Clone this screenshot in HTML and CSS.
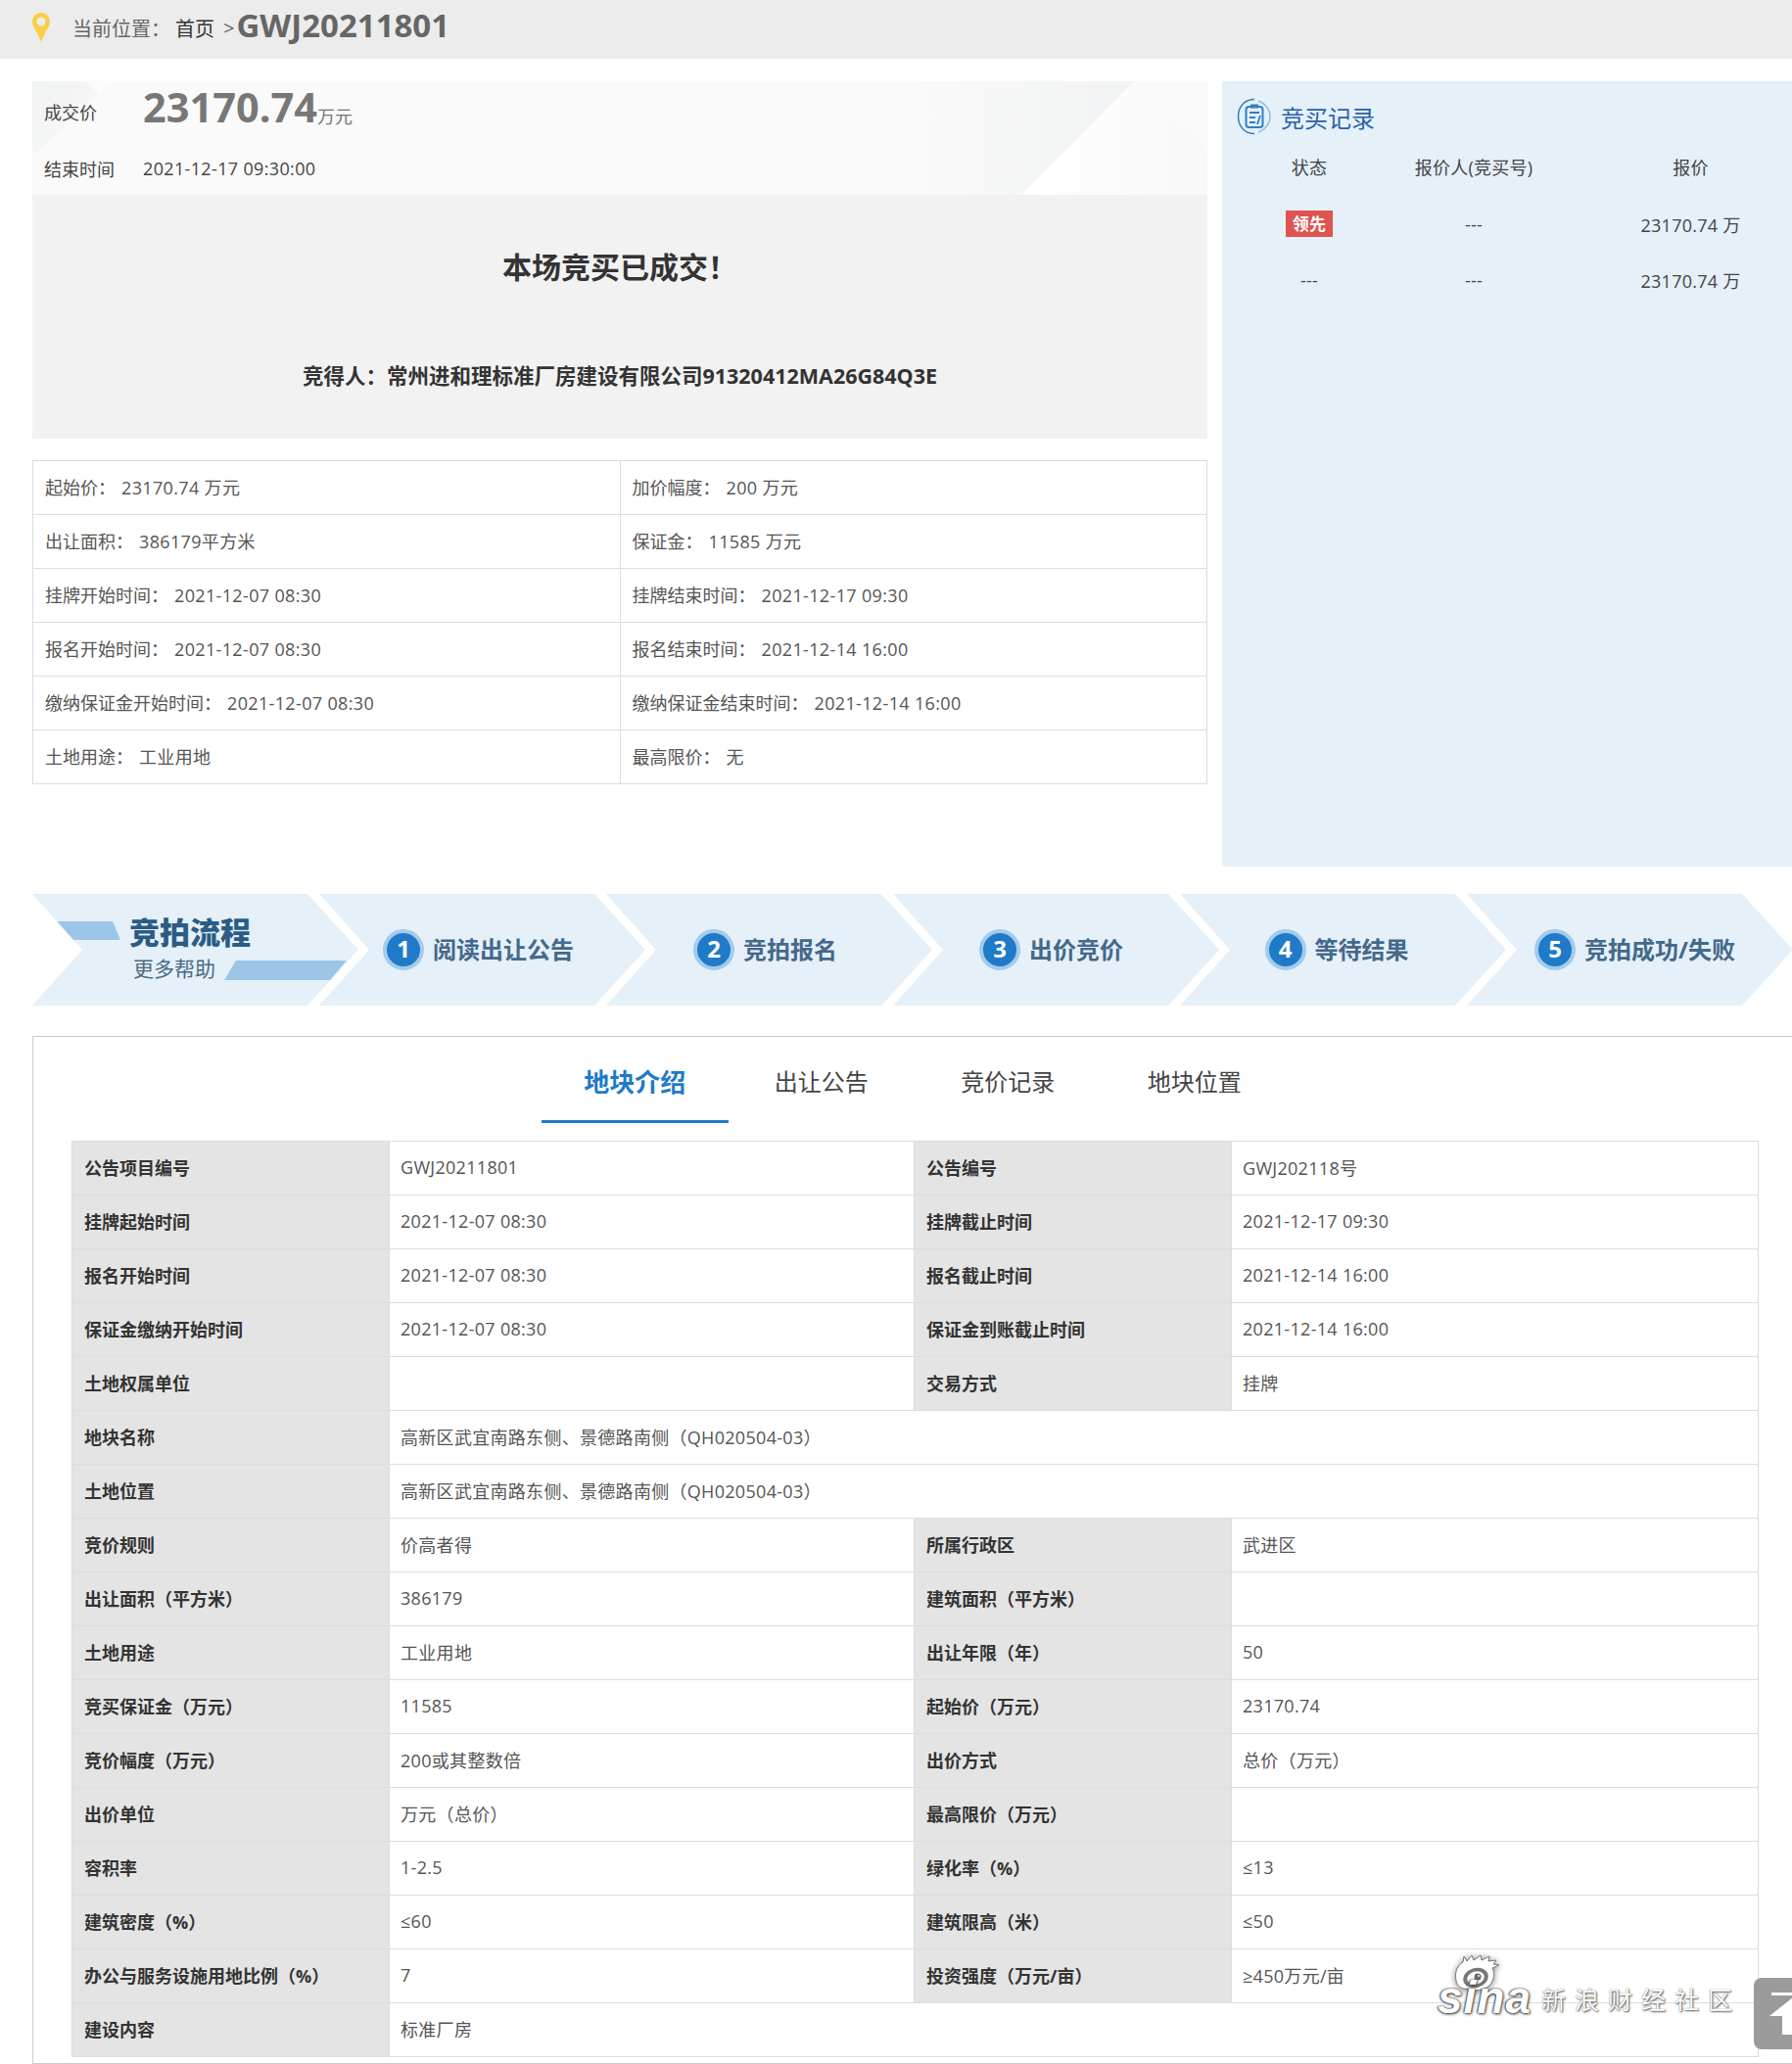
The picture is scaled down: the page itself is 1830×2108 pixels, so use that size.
FILE: index.html
```html
<!DOCTYPE html>
<html lang="zh-CN">
<head>
<meta charset="utf-8">
<title>GWJ20211801</title>
<link rel="stylesheet" href="styles.css">
</head>
<body>
<header class="crumb">
  <svg class="pin" viewBox="0 0 18 30"><path fill="#f8cf45" d="M9 0C4 0 0 4 0 9c0 6 5 9 9 21 4-12 9-15 9-21 0-5-4-9-9-9zm0 13.500a4.500 4.500 0 1 1 0-9 4.500 4.500 0 0 1 0 9z"/></svg>
  <span class="crumb-label">当前位置：</span><span class="crumb-home">首页</span><span class="crumb-sep">&gt;</span><span class="crumb-code">GWJ20211801</span>
</header>

<div class="top">
  <section class="left">
    <div class="deal">
      <svg class="deal-bg" viewBox="0 0 1200 116" preserveAspectRatio="none">
        <defs>
          <linearGradient id="g1" x1="0" x2="1" y1="0" y2="0"><stop offset="0" stop-color="#fafafa"/><stop offset="1" stop-color="#f1f3f4"/></linearGradient>
          <linearGradient id="g2" x1="0" x2="1" y1="0" y2="0"><stop offset="0" stop-color="#ffffff"/><stop offset="1" stop-color="#f8f8f8"/></linearGradient>
          <linearGradient id="g3" x1="0" x2="1" y1="0" y2="1"><stop offset="0" stop-color="#f0f2f3"/><stop offset="1" stop-color="#fafafa"/></linearGradient>
        </defs>
        <rect width="1200" height="116" fill="#fafafa"/>
        <polygon points="0,0 82,0 0,76" fill="url(#g3)"/>
        <polygon points="56,0 82,0 68,14" fill="#fcfcfc"/>
        <polygon points="900,0 1125,0 1010,116 900,116" fill="url(#g1)"/>
        <polygon points="1125,0 1200,70 1200,116 1010,116" fill="url(#g2)"/>
      </svg>
      <div class="deal-row deal-price">
        <span class="deal-label">成交价</span><strong class="price">23170.74</strong><span class="unit">万元</span>
      </div>
      <div class="deal-row deal-time">
        <span class="deal-label">结束时间</span><span class="deal-date">2021-12-17 09:30:00</span>
      </div>
    </div>
    <div class="result">
      <h2 class="result-title">本场竞买已成交！</h2>
      <p class="result-winner">竞得人：常州进和理标准厂房建设有限公司91320412MA26G84Q3E</p>
    </div>
    <table class="info">
      <tr><td>起始价：<span class="v">23170.74 万元</span></td><td>加价幅度：<span class="v">200 万元</span></td></tr>
      <tr><td>出让面积：<span class="v">386179平方米</span></td><td>保证金：<span class="v">11585 万元</span></td></tr>
      <tr><td>挂牌开始时间：<span class="v">2021-12-07 08:30</span></td><td>挂牌结束时间：<span class="v">2021-12-17 09:30</span></td></tr>
      <tr><td>报名开始时间：<span class="v">2021-12-07 08:30</span></td><td>报名结束时间：<span class="v">2021-12-14 16:00</span></td></tr>
      <tr><td>缴纳保证金开始时间：<span class="v">2021-12-07 08:30</span></td><td>缴纳保证金结束时间：<span class="v">2021-12-14 16:00</span></td></tr>
      <tr><td>土地用途：<span class="v">工业用地</span></td><td>最高限价：<span class="v">无</span></td></tr>
    </table>
  </section>

  <aside class="records">
    <h3 class="records-title">
      <svg class="rec-icon" viewBox="0 0 36 38" fill="none" stroke="#2f7fc4">
        <path stroke-width="1.500" d="M18 1.500C8 1.500 1.500 9 1.500 19S8 36.500 18 36.500"/>
        <path stroke-width="1.500" d="M22 3c7 2.500 12 8.500 12 16s-5 13.500-12 16" stroke="#8fbbe0"/>
        <rect x="9.500" y="9" width="17" height="21" rx="3" stroke-width="2"/>
        <rect x="14" y="6.500" width="8" height="4" fill="#2f7fc4" stroke="none"/>
        <path stroke-width="1.800" d="M13 15h10M13 20h6M13 25h6M24 18l-3 9"/>
      </svg>
      <span>竞买记录</span>
    </h3>
    <div class="rec-grid rec-head"><span>状态</span><span>报价人(竞买号)</span><span>报价</span></div>
    <div class="rec-grid"><span><b class="badge">领先</b></span><span>---</span><span>23170.74 万</span></div>
    <div class="rec-grid"><span>---</span><span>---</span><span>23170.74 万</span></div>
  </aside>
</div>

<nav class="flow">
  <a class="chev chev-head">
    <svg class="bars" viewBox="0 0 333 114"><polygon fill="#9cc5e8" points="25,28 82,28 90,47 41,47"/><polygon fill="#9cc5e8" points="208,68 321,68 304,88 196,88"/></svg>
    <span class="head-main">竞拍流程</span>
    <span class="head-sub">更多帮助</span>
  </a>
  <a class="chev"><i class="num">1</i><span class="step-text">阅读出让公告</span></a>
  <a class="chev"><i class="num">2</i><span class="step-text">竞拍报名</span></a>
  <a class="chev chev-third"><i class="num">3</i><span class="step-text">出价竞价</span></a>
  <a class="chev chev-fourth"><i class="num">4</i><span class="step-text">等待结果</span></a>
  <a class="chev chev-last"><i class="num">5</i><span class="step-text">竞拍成功/失败</span></a>
</nav>

<main class="detail">
  <div class="tabs">
    <a class="tab active">地块介绍</a><a class="tab">出让公告</a><a class="tab">竞价记录</a><a class="tab">地块位置</a>
  </div>
  <table class="props">
    <colgroup><col class="c-l"><col class="c-v"><col class="c-l"><col class="c-e"></colgroup>
    <tr><th>公告项目编号</th><td>GWJ20211801</td><th>公告编号</th><td>GWJ202118号</td></tr>
    <tr><th>挂牌起始时间</th><td>2021-12-07 08:30</td><th>挂牌截止时间</th><td>2021-12-17 09:30</td></tr>
    <tr><th>报名开始时间</th><td>2021-12-07 08:30</td><th>报名截止时间</th><td>2021-12-14 16:00</td></tr>
    <tr><th>保证金缴纳开始时间</th><td>2021-12-07 08:30</td><th>保证金到账截止时间</th><td>2021-12-14 16:00</td></tr>
    <tr><th>土地权属单位</th><td></td><th>交易方式</th><td>挂牌</td></tr>
    <tr><th>地块名称</th><td colspan="3">高新区武宜南路东侧、景德路南侧（QH020504-03）</td></tr>
    <tr><th>土地位置</th><td colspan="3">高新区武宜南路东侧、景德路南侧（QH020504-03）</td></tr>
    <tr><th>竞价规则</th><td>价高者得</td><th>所属行政区</th><td>武进区</td></tr>
    <tr><th>出让面积（平方米）</th><td>386179</td><th>建筑面积（平方米）</th><td></td></tr>
    <tr><th>土地用途</th><td>工业用地</td><th>出让年限（年）</th><td>50</td></tr>
    <tr><th>竞买保证金（万元）</th><td>11585</td><th>起始价（万元）</th><td>23170.74</td></tr>
    <tr><th>竞价幅度（万元）</th><td>200或其整数倍</td><th>出价方式</th><td>总价（万元）</td></tr>
    <tr><th>出价单位</th><td>万元（总价）</td><th>最高限价（万元）</th><td></td></tr>
    <tr><th>容积率</th><td>1-2.5</td><th>绿化率（%）</th><td>≤13</td></tr>
    <tr><th>建筑密度（%）</th><td>≤60</td><th>建筑限高（米）</th><td>≤50</td></tr>
    <tr><th>办公与服务设施用地比例（%）</th><td>7</td><th>投资强度（万元/亩）</th><td>≥450万元/亩</td></tr>
    <tr><th>建设内容</th><td colspan="3">标准厂房</td></tr>
  </table>
</main>

<div class="watermark">
  <svg class="eye" viewBox="0 0 50 46">
    <path fill="#fff" stroke="#777" stroke-width="1" d="M3 28C1 18 5 12 10 9L11 3l3 5 5-6 2 5 7-5 1 5 8-4-1 5 8-1-3 4 6 1-7 3c3 5 2 12-3 18-6 5-15 6-22 3C8 37 4 33 3 28z"/>
    <ellipse cx="23" cy="25" rx="13" ry="10" fill="#777" transform="rotate(-18 23 25)"/>
    <ellipse cx="23" cy="25" rx="9" ry="6.500" fill="#fff" transform="rotate(-18 23 25)"/>
    <circle cx="25" cy="24" r="3.500" fill="#666"/>
    <circle cx="26" cy="23" r="1" fill="#fff"/>
  </svg>
  <span class="wm-sina">sina</span>
  <span class="wm-text">新浪财经社区</span>
</div>

<a class="totop">
  <svg viewBox="0 0 40 73"><rect width="40" height="73" fill="#9b9b9b"/><rect x="18" y="15" width="22" height="3" fill="#fff"/><polygon points="16,39 40,20 40,58 29,58 29,39" fill="#fff"/></svg>
</a>
</body>
</html>
```
FILE: styles.css
```css
* { box-sizing: border-box; }
html, body { margin: 0; padding: 0; }
body {
  position: relative;
  width: 1830px;
  height: 2108px;
  overflow: hidden;
  background: #fff;
  color: #555;
  font-family: "Open Sans", "Noto Sans CJK SC", sans-serif;
  font-size: 18px;
}

/* breadcrumb */
.crumb {
  height: 60px;
  background: #ececec;
  display: flex;
  align-items: center;
  padding-left: 33px;
  font-size: 20px;
}
.pin { width: 18px; height: 30px; margin: -5px 23px 0 0; }
.crumb-label { color: #666; margin-top: -3px; }
.crumb-home { color: #333; margin: -3px 0 0 5px; }
.crumb-sep { color: #666; margin: -3px 2px 0 9px; }
.crumb-code { color: #666; font-size: 33px; font-weight: 700; line-height: 1; margin-top: -10px; }

/* top area */
.top {
  display: flex;
  gap: 15px;
  padding: 23px 0 0 33px;
  height: 825px;
}
.left { width: 1200px; }

.deal {
  position: relative;
  height: 116px;
  padding-left: 12px;
  color: #444;
}
.deal-bg { position: absolute; inset: 0; width: 100%; height: 100%; }
.deal-row { position: relative; display: flex; align-items: center; }
.deal-label { width: 101px; }
.deal-price { height: 52px; }
.deal-price .deal-label { padding-top: 10px; }
.price { font-size: 41.500px; font-weight: 700; color: #777; line-height: 52px; }
.unit { color: #777; padding-top: 18px; }
.deal-time { height: 64px; padding-top: 10px; }
.deal-date { letter-spacing: .35px; }

.result {
  height: 249px;
  background: #f2f2f2;
  text-align: center;
  color: #333;
}
.result-title {
  margin: 0;
  padding: 52px 0 0 0;
  font-size: 30px;
  line-height: 44px;
  font-weight: 700;
}
.result-winner {
  margin: 0;
  padding-top: 73px;
  font-size: 21.500px;
  line-height: 32px;
  font-weight: 700;
}

.info {
  width: 1200px;
  margin-top: 22px;
  border-collapse: collapse;
  table-layout: fixed;
}
.info td {
  height: 55px;
  padding: 0 0 2px 12px;
  border: 1px solid #ddd;
}
.info .v { margin-left: 6px; letter-spacing: .35px; }

/* records */
.records {
  width: 582px;
  height: 802px;
  background: #e5f0f9;
  color: #444;
}
.records-title {
  margin: 0;
  height: 59px;
  padding: 13px 0 0 15px;
  display: flex;
  align-items: center;
  gap: 9px;
  font-size: 24px;
  font-weight: 400;
  color: #2a62a8;
}
.rec-icon { width: 36px; height: 38px; }
.rec-grid {
  display: grid;
  grid-template-columns: 100px 236px 207px;
  padding-left: 39px;
  height: 57px;
  align-items: center;
  text-align: center;
  letter-spacing: .25px;
}
.rec-head { height: 58px; padding-bottom: 3px; }
.badge {
  display: block;
  width: 48px;
  height: 27px;
  margin: 0 auto;
  background: #df5450;
  color: #fff;
  font-size: 17px;
  line-height: 27px;
  font-weight: 700;
}

/* flow */
.flow {
  display: flex;
  margin: 28px 0 0 33px;
  height: 114px;
}
.chev {
  position: relative;
  flex: none;
  width: 333px;
  height: 114px;
  margin-right: -40px;
  padding-right: 8px;
  background: #e5f0f9;
  clip-path: polygon(0 0, 281px 0, 333px 57px, 281px 114px, 0 114px, 51px 57px);
  display: flex;
  align-items: center;
  justify-content: center;
  gap: 9px;
  font-size: 24px;
  font-weight: 700;
  color: #44698a;
}
.chev-third { padding-right: 10px; }
.chev-fourth { padding-right: 13px; }
.chev-last { padding-left: 18px; }
.step-text { margin-top: -4px; }
.num {
  width: 42px;
  height: 42px;
  border-radius: 50%;
  background: #1f7ac8;
  border: 4px solid #a3cbea;
  color: #fff;
  font-size: 24px;
  font-style: normal;
  font-weight: 700;
  line-height: 32px;
  text-align: center;
}
.chev-head { display: block; }
.bars { position: absolute; inset: 0; width: 333px; height: 114px; }
.head-main {
  position: absolute;
  left: 99px;
  top: 16px;
  font-size: 31px;
  line-height: 46px;
  font-weight: 900;
  color: #2a5d85;
}
.head-sub {
  position: absolute;
  left: 103px;
  top: 60px;
  font-size: 21px;
  line-height: 32px;
  font-weight: 400;
  color: #4a6a85;
}

/* detail */
.detail {
  margin: 31px 0 0 33px;
  height: 1050px;
  border: 1px solid #ccc;
  border-right: 0;
  padding: 0 0 0 39px;
}
.tabs {
  display: flex;
  height: 88px;
  padding-left: 480px;
}
.tab {
  width: 190.500px;
  height: 88px;
  text-align: center;
  font-size: 24px;
  line-height: 92px;
  color: #444;
}
.tab.active {
  border-bottom: 3px solid #1f7ac8;
  color: #1f7ac8;
  font-size: 26px;
  font-weight: 700;
}
.props {
  width: 1722px;
  margin-top: 18px;
  border-collapse: collapse;
  table-layout: fixed;
}
.c-l { width: 324px; }
.c-v { width: 536px; }
.c-e { width: 538px; }
.props th, .props td {
  height: 55px;
  padding: 0 0 2px 12px;
  border: 1px solid #ddd;
  text-align: left;
  font-size: 18px;
  font-weight: 400;
}
.props td { padding-left: 11px; letter-spacing: .3px; }
.props th {
  background: #e4e4e4;
  color: #333;
  font-weight: 700;
}

/* overlays */
.watermark {
  position: absolute;
  left: 1460px;
  top: 1992px;
  width: 320px;
  height: 80px;
}
.eye {
  position: absolute;
  left: 24px;
  top: 3px;
  width: 50px;
  height: 46px;
  filter: drop-shadow(0 1px 3px rgba(0,0,0,.5));
}
.wm-sina {
  position: absolute;
  left: 8px;
  top: 18px;
  font-family: "Liberation Sans", sans-serif;
  font-size: 46px;
  line-height: 60px;
  font-style: italic;
  font-weight: 700;
  letter-spacing: 1px;
  color: #fff;
  text-shadow: 0 0 1px #333, 1px 1px 3px #333, -1px 0 2px #555;
}
.wm-text {
  position: absolute;
  left: 114px;
  top: 33px;
  font-size: 25px;
  line-height: 34px;
  letter-spacing: 9px;
  color: #fff;
  white-space: nowrap;
  text-shadow: 0 0 1px #555, 1px 1px 2px #555;
}
.totop {
  position: absolute;
  left: 1791px;
  top: 2020px;
  width: 39px;
  height: 73px;
  border-radius: 8px 0 0 8px;
  overflow: hidden;
}
.totop svg { display: block; width: 40px; height: 73px; }
```
